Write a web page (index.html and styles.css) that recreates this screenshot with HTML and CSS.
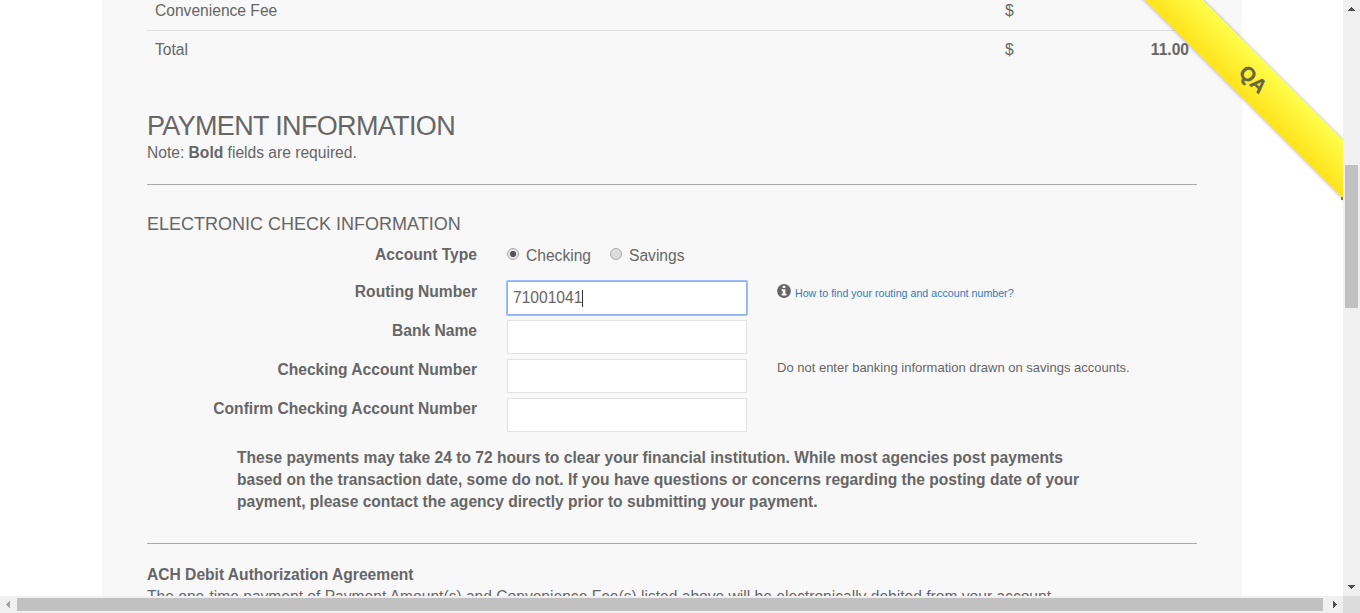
FILE: index.html
```html
<!DOCTYPE html>
<html lang="en">
<head>
<meta charset="utf-8">
<title>Payment Information</title>
<link rel="stylesheet" href="styles.css">
</head>
<body>
<div class="window">
  <div class="viewport">
    <main class="panel">
      <div class="fees">
        <div class="fee-row"><span>Convenience Fee</span><span>$</span><b></b></div>
        <div class="fee-row total"><span>Total</span><span>$</span><b>11.00</b></div>
      </div>
      <h2 class="title">PAYMENT INFORMATION</h2>
      <p class="note">Note: <b>Bold</b> fields are required.</p>
      <hr class="rule">
      <h3 class="subtitle">ELECTRONIC CHECK INFORMATION</h3>
      <div class="form">
        <div class="row types">
          <span class="label">Account Type</span>
          <div class="radios">
            <span class="radio on"></span><span class="checking">Checking</span>
            <span class="radio"></span><span>Savings</span>
          </div>
        </div>
        <div class="row">
          <span class="label">Routing Number</span>
          <div class="field focus"><span>71001041</span><i class="caret"></i></div>
          <div class="help link">
            <svg class="info" viewBox="0 0 14 14"><circle cx="7" cy="7" r="6.9" fill="#666"/><path d="M5.6 1.8h2.8v2.2H5.6zM4.6 5.2h3.8v4.5h1.1v1.8H4.6V9.7h1.1V7H4.6z" fill="#f8f8f8"/></svg>
            <a>How to find your routing and account number?</a>
          </div>
        </div>
        <div class="row">
          <span class="label">Bank Name</span>
          <div class="field"></div>
        </div>
        <div class="row">
          <span class="label">Checking Account Number</span>
          <div class="field"></div>
          <div class="help">Do not enter banking information drawn on savings accounts.</div>
        </div>
        <div class="row">
          <span class="label">Confirm Checking Account Number</span>
          <div class="field"></div>
        </div>
      </div>
      <p class="notice">These payments may take 24 to 72 hours to clear your financial institution. While most agencies post payments<br>based on the transaction date, some do not. If you have questions or concerns regarding the posting date of your<br>payment, please contact the agency directly prior to submitting your payment.</p>
      <hr class="rule">
      <p class="ach"><b>ACH Debit Authorization Agreement</b><br>The one-time payment of Payment Amount(s) and Convenience Fee(s) listed above will be electronically debited from your account.</p>
    </main>
    <div class="ribbon">QA</div>
    <span class="ribbon-fold"></span>
  </div>
  <div class="vbar">
    <svg class="arrow" viewBox="0 0 17 17" shape-rendering="crispEdges"><path d="M8 7h1v1h1v1h1v1h1v1H5v-1h1V9h1V8h1z" fill="#505050"/></svg>
    <span class="vthumb"></span>
    <svg class="arrow bottom" viewBox="0 0 17 17" shape-rendering="crispEdges"><path d="M5 6h7v1h-1v1h-1v1H9v1H8V9H7V8H6V7H5z" fill="#505050"/></svg>
  </div>
  <div class="hbar">
    <svg class="arrow" viewBox="0 0 17 17" shape-rendering="crispEdges"><path d="M10 5v7H9v-1H8v-1H7V9H6V8h1V7h1V6h1V5z" fill="#a3a3a3"/></svg>
    <span class="hthumb"></span>
    <svg class="arrow right" viewBox="0 0 17 17" shape-rendering="crispEdges"><path d="M7 5v7h1v-1h1v-1h1V9h1V8h-1V7H9V6H8V5z" fill="#505050"/></svg>
  </div>
  <div class="corner"></div>
</div>
</body>
</html>
```

FILE: styles.css
```css
* { box-sizing: border-box; }
body {
  margin: 0;
  overflow: hidden;
  background: #fff;
  color: #666;
  font: 15.6px/22px "Liberation Sans", Arial, sans-serif;
}
.window {
  display: grid;
  grid-template: 596px 17px / 1343px 17px;
}
.viewport {
  position: relative;
  overflow: hidden;
}
.panel {
  width: 1140px;
  height: 596px;
  margin-left: 102px;
  padding: 0 45px;
  background: #f8f8f8;
}
.fee-row {
  display: grid;
  grid-template-columns: 850px 84px 1fr;
  padding: 0 8px 8px;
  height: 30px;
}
.fee-row b { text-align: right; }
.total {
  height: 39px;
  padding-top: 8px;
  border-top: 1px solid #ddd;
}
.title {
  margin: 41px 0 0;
  font-size: 27px;
  font-weight: 400;
  letter-spacing: -.66px;
  line-height: 32px;
}
.note { margin: 0; }
.rule {
  margin: 20px 0 0;
  border: 0;
  border-top: 1px solid #aaa;
}
.subtitle {
  margin: 27px 0 0;
  font-size: 18px;
  font-weight: 400;
  line-height: 24px;
}
.form { padding-top: 8px; }
.row {
  display: grid;
  grid-template-columns: 330px 240px 1fr;
  column-gap: 30px;
  height: 39px;
}
.label {
  font-weight: 700;
  text-align: right;
}
.types { height: 37px; }
.radios {
  display: flex;
  height: 24px;
  align-items: center;
}
.radio {
  width: 12px;
  height: 12px;
  margin: 0 7px 4px 0;
  border: 1px solid #aaa;
  border-radius: 50%;
  background: linear-gradient(#e0e0e0, #d9d9d9);
}
.radio.on { background: radial-gradient(circle, #555 2.7px, #e4e4e4 3.5px); }
.checking { margin-right: 19px; }
.field {
  display: flex;
  align-items: center;
  height: 34px;
  padding-left: 5px;
  border: 1px solid #e2e2e2;
  background: #fff;
  font-size: 15.6px;
}
.focus {
  border-color: #8fb4f0;
  box-shadow: 0 0 0 1px #9abcf8;
  border-radius: 1px;
}
.caret {
  width: 1px;
  height: 17px;
  background: #333;
}
.help {
  font-size: 13px;
  line-height: 18px;
}
.link {
  display: flex;
  padding-top: 3px;
  gap: 4px;
  color: #337ab7;
  font-size: 10.66px;
}
.info {
  width: 14px;
  height: 14px;
}
.notice {
  margin: 10px 0 0;
  padding-left: 90px;
  font-weight: 700;
  white-space: nowrap;
}
.notice + .rule { margin-top: 30px; }
.ach {
  margin: 20px 0 0;
  white-space: nowrap;
}
.ribbon {
  position: absolute;
  left: 1052.5px;
  top: 59px;
  width: 400px;
  height: 41px;
  transform: rotate(45deg);
  background: linear-gradient(#ffff4b, #ffe21b);
  box-shadow: 0 0 4px rgba(0, 0, 0, .35);
  color: #6b672f;
  font-size: 20px;
  font-weight: 700;
  line-height: 41px;
  text-align: center;
  text-shadow: 0 0 1px #888;
}
.ribbon-fold {
  position: absolute;
  left: 1341px;
  top: 197px;
  width: 2px;
  height: 3px;
  background: #6d8a18;
}
.vbar {
  display: flex;
  flex-direction: column;
  align-items: center;
  background: #f0f0f0;
}
.vthumb {
  width: 13px;
  height: 143px;
  margin-top: 148px;
  background: #c1c1c1;
}
.hbar {
  display: flex;
  align-items: center;
  background: #f0f0f0;
}
.hthumb {
  width: 1306px;
  height: 13px;
  background: #c1c1c1;
}
.arrow {
  width: 17px;
  height: 17px;
  flex: none;
}
.bottom { margin-top: auto; }
.right { margin-left: auto; }
.corner { background: #dcdcdc; }
```
